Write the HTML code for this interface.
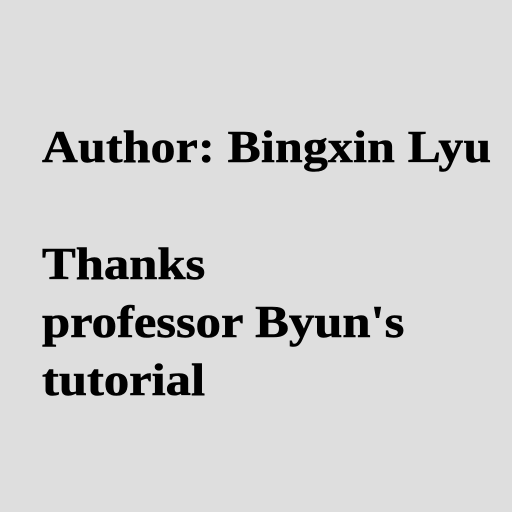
<!DOCTYPE html>
<html><head><style>
html,body{margin:0;padding:0;width:512px;height:512px;background:#dedede;overflow:hidden}
.t{position:absolute;left:42px;font-family:"Liberation Serif",serif;font-weight:bold;font-size:46px;line-height:58px;color:#000;white-space:nowrap;transform-origin:0 0;-webkit-text-stroke:0.6px #000}
</style></head><body>
<div class="t" style="top:118px;letter-spacing:0.3px;transform:scaleX(1.077)">Author: Bingxin Lyu</div>
<div class="t" style="top:235px;transform:scaleX(1.1)">Thanks<br>professor Byun's<br>tutorial</div>
</body></html>
